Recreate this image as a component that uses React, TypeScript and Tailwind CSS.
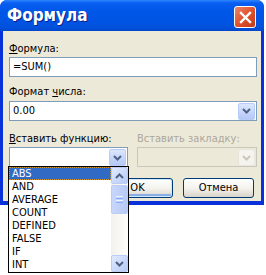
const ui = { fontFamily: '"DejaVu Sans Condensed", "Liberation Sans", sans-serif' };

function Chevron({ up, color }: { up?: boolean; color: string }) {
  return (
    <svg width="9" height="6" viewBox="0 0 9 6">
      <path d={up ? 'M1 5 L4.5 1.5 L8 5' : 'M1 1 L4.5 4.5 L8 1'} fill="none" stroke={color} strokeWidth="2" />
    </svg>
  );
}

function DropButton({ disabled }: { disabled?: boolean }) {
  return (
    <div
      className={
        'w-[17px] h-[17px] m-px rounded-[2px] border flex items-center justify-center ' +
        (disabled
          ? 'border-[#E8E6DC] bg-[#F4F3EE]'
          : 'border-[#B9CBF9] bg-gradient-to-b from-[#DCE6FD] to-[#B4C8F6]')
      }
    >
      <Chevron color={disabled ? '#C9C7BA' : '#4D6185'} />
    </div>
  );
}

function ScrollButton({ up }: { up?: boolean }) {
  return (
    <div className="h-[17px] w-[17px] rounded-[2px] border border-[#BBCDF6] bg-gradient-to-br from-[#E1EAFE] to-[#B7CAF5] flex items-center justify-center">
      <Chevron up={up} color="#4D6185" />
    </div>
  );
}

const funcs = ['ABS', 'AND', 'AVERAGE', 'COUNT', 'DEFINED', 'FALSE', 'IF', 'INT'];

export default function App() {
  return (
    <div className="relative w-[266px] h-[275px] bg-white text-[11px] text-black" style={ui}>
      <div className="w-[264px] h-[205px] rounded-t-[7px] bg-[#0831D9] flex flex-col">
        <div className="h-[31px] rounded-t-[7px] bg-[linear-gradient(to_bottom,#2E86FC_0px,#0A5EF3_3px,#0057E8_10px,#0054E3_22px,#0050DB_28px,#0046C9_31px)] flex items-start justify-between pl-[7px] pr-[8px]">
          <span className="pt-[5px] text-[17px] leading-[20px] font-bold text-white [text-shadow:1px_1px_0_#0A1E8C]">
            Формула
          </span>
          <div className="mt-[6px] w-[22px] h-[22px] rounded-[3px] border border-white bg-gradient-to-br from-[#E9856A] via-[#E0522D] to-[#C23A17] flex items-center justify-center">
            <svg width="13" height="13" viewBox="0 0 13 13">
              <path d="M2 2 L11 11 M11 2 L2 11" stroke="white" strokeWidth="2.4" strokeLinecap="square" />
            </svg>
          </div>
        </div>

        <div className="flex-1 mx-[3px] mb-[4px] bg-[#ECE9D8] pl-[6px] pr-[4px] pt-[11px]">
          <div className="leading-[13px]">
            <span className="underline">Ф</span>ормула:
          </div>
          <div className="mt-[2px] h-[20px] border border-[#7F9DB9] bg-white pl-[3px] leading-[18px]">=SUM()</div>

          <div className="mt-[8px] leading-[13px]">
            Формат <span className="underline">ч</span>исла:
          </div>
          <div className="mt-[3px] h-[20px] border border-[#7F9DB9] bg-white flex items-center justify-between pl-[3px]">
            <span>0.00</span>
            <DropButton />
          </div>

          <div className="mt-[11px] flex gap-[9px]">
            <div className="w-[119px]">
              <div className="leading-[13px]">
                <span className="underline">В</span>ставить функцию:
              </div>
              <div className="mt-[2px] h-[20px] border border-[#7F9DB9] bg-white flex justify-end">
                <DropButton />
              </div>
            </div>
            <div className="w-[120px]">
              <div className="leading-[13px] text-[#ACA899]">Вставить закладку:</div>
              <div className="mt-[2px] h-[20px] border border-[#C9C7BA] flex justify-end">
                <DropButton disabled />
              </div>
            </div>
          </div>

          <div className="mt-[11px] flex justify-end gap-[10px] pr-[3px]">
            <button className="w-[71px] h-[20px] rounded-[3px] border border-[#003C74] bg-gradient-to-b from-white via-[#F4F3EE] to-[#D9D4C9] shadow-[inset_0_0_0_1px_#CEE7FF,inset_0_-2px_0_1px_#89ADE4]">
              OK
            </button>
            <button className="w-[71px] h-[20px] rounded-[3px] border border-[#003C74] bg-gradient-to-b from-white via-[#F4F3EE] to-[#D9D4C9]">
              Отмена
            </button>
          </div>
        </div>
      </div>

      <div className="absolute left-[8px] top-[166px] w-[121px] h-[107px] border border-black bg-white flex">
        <div className="flex-1 flex flex-col">
          {funcs.map((f, i) => (
            <div
              key={f}
              className={
                'h-[13px] leading-[11px] pl-[2px] ' +
                (i === 0 ? 'bg-[#316AC5] text-white border border-dotted border-[#CE9539]' : 'border border-transparent')
              }
            >
              {f}
            </div>
          ))}
        </div>
        <div className="w-[17px] flex flex-col bg-gradient-to-r from-[#F3F1EC] to-[#FEFEFB]">
          <ScrollButton up />
          <div className="mt-px h-[29px] rounded-[2px] border border-[#BBCDF6] bg-gradient-to-r from-[#C8D6FB] to-[#B7CAF5] flex flex-col items-center justify-center gap-px">
            <div className="w-[7px] h-px bg-[#EEF4FE]" />
            <div className="w-[7px] h-px bg-[#8CB0F8]" />
            <div className="w-[7px] h-px bg-[#EEF4FE]" />
            <div className="w-[7px] h-px bg-[#8CB0F8]" />
          </div>
          <div className="flex-1" />
          <ScrollButton />
        </div>
      </div>
    </div>
  );
}
